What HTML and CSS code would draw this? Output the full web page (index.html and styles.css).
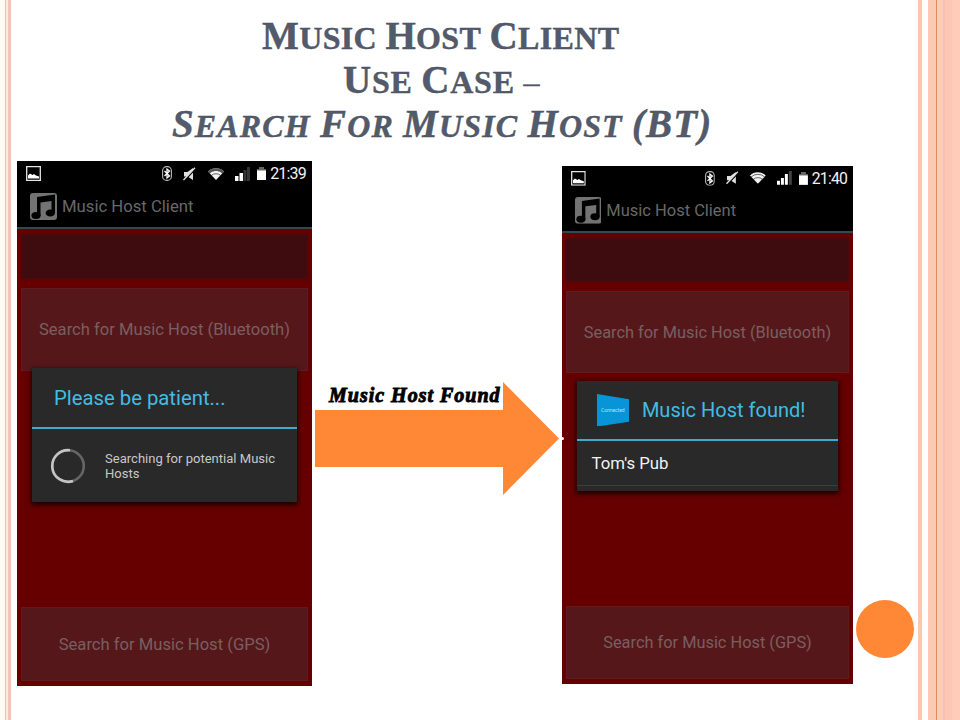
FILE: index.html
```
<!DOCTYPE html>
<html lang="en">
<head>
<meta charset="utf-8">
<title>Music Host Client</title>
<link rel="stylesheet" href="styles.css">
</head>
<body>
<svg class="defs" width="0" height="0">
  <symbol id="picture" viewBox="0 0 15 15"><path d="M.7.7h13.6v13.6H.7z" fill="none" stroke="#e4e4e4" stroke-width="1.3"/><path d="M2 12.500V9.500l2-2 2.500 1.500L8 8l2 1.500 3 1v2z" fill="#fff"/></symbol>
  <symbol id="bluetooth" viewBox="0 0 10 15"><rect x=".6" y=".6" width="8.800" height="13.800" rx="4" fill="none" stroke="#bbb" stroke-width="1.100"/><path d="M2.500 5l5 5L5 12V3l2.500 2-5 5" fill="none" stroke="#fff" stroke-width="1.300"/></symbol>
  <symbol id="muted" viewBox="0 0 13 14"><path d="M1 5h3.500L10 1v12l-5.500-3.500H1z" fill="#e0e0e0"/><path d="M1 14L13 1.500" stroke="#000" stroke-width="1.300"/><path d="M.5 13L12 .8" stroke="#e0e0e0" stroke-width="1.300"/></symbol>
  <symbol id="wifi" viewBox="0 0 16 12"><path d="M0 3.500a11.500 11.500 0 0 1 16 0L8 12z" fill="#f4f4f4"/><path d="M1 5.200a10 10 0 0 1 14 0M3.200 7.600a7 7 0 0 1 9.600 0" fill="none" stroke="#222" stroke-width=".7"/></symbol>
  <symbol id="music" viewBox="0 0 27 27"><rect width="27" height="27" rx="3" fill="#737373"/><path d="M7 4L25 1.500V20h-3.500V8L10.500 9.500V23H7z" fill="#000"/><ellipse cx="6" cy="22.500" rx="4.600" ry="3.500" fill="#000"/><ellipse cx="20.300" cy="20" rx="4.700" ry="3.500" fill="#000"/></symbol>
</svg>
<main class="slide">
  <h1 class="title">
    <span class="line one"><span class="w">Music</span> <span class="w">Host</span> <span class="w">Client</span></span>
    <span class="line two"><span class="w">Use</span> <span class="w">Case</span> <span class="dash">–</span></span>
    <span class="line three"><span class="w">Search</span> <span class="w">For</span> <span class="w">Music</span> <span class="w">Host</span> <span class="big">(BT)</span></span>
  </h1>
  <div class="flow">
    <section class="phone">
      <div class="status">
        <svg class="pic"><use href="#picture"/></svg>
        <svg class="bt"><use href="#bluetooth"/></svg>
        <svg class="mute"><use href="#muted"/></svg>
        <svg class="wifi" viewBox="0 0 16 12"><use href="#wifi" width="16" height="12"/><path d="M0 3.500a11.500 11.500 0 0 1 16 0L14.500 5.200a9.500 9.500 0 0 0-13 0z" fill="#555"/></svg>
        <svg class="bars" viewBox="0 0 15 14"><path d="M0 9h3.500v5H0zM4.500 6H8v8H4.500z" fill="#fff"/><path d="M8.500 3h3v11h-3zM12 0h3v14h-3z" fill="#333"/></svg>
        <svg class="battery" viewBox="0 0 9 13"><path d="M0 2h2V0h5v2h2v11H0z" fill="#666"/><path d="M0 3.500h9V13H0z" fill="#fff"/></svg>
        <span class="clock">21:39</span>
      </div>
      <header class="appbar"><svg class="logo"><use href="#music"/></svg><span>Music Host Client</span></header>
      <div class="field"></div>
      <div class="button search">Search for Music Host (Bluetooth)</div>
      <div class="button gps">Search for Music Host (GPS)</div>
      <div class="dialog waiting">
        <h2>Please be patient...</h2>
        <div class="progress">
          <svg class="spinner" viewBox="0 0 36 36" fill="none" stroke-width="2.600"><circle cx="18" cy="18" r="15.800" stroke="#666"/><path d="M23 33A15.800 15.800 0 1 1 20 2.300" stroke="#c4c4c4"/></svg>
          <p>Searching for potential Music Hosts</p>
        </div>
      </div>
    </section>
    <div class="step">
      <p class="caption">Music Host Found</p>
      <svg class="arrow" viewBox="0 0 248 113"><path d="M0 28h188V0l56 56.500L188 113V85H0z" fill="#ff8837"/></svg>
    </div>
    <section class="phone second">
      <div class="status">
        <svg class="pic"><use href="#picture"/></svg>
        <svg class="bt"><use href="#bluetooth"/></svg>
        <svg class="mute"><use href="#muted"/></svg>
        <svg class="wifi" viewBox="0 0 16 12"><use href="#wifi" width="16" height="12"/></svg>
        <svg class="bars" viewBox="0 0 15 14"><path d="M0 10h3v4H0zM4 7h3v7H4zM8 3h3v11H8z" fill="#fff"/><path d="M12 0h3v14h-3z" fill="#444"/></svg>
        <svg class="battery" viewBox="0 0 9 13"><path d="M0 2h2V0h5v2h2v11H0z" fill="#666"/><path d="M0 3.500h9V13H0z" fill="#fff"/></svg>
        <span class="clock">21:40</span>
      </div>
      <header class="appbar"><svg class="logo"><use href="#music"/></svg><span>Music Host Client</span></header>
      <div class="field"></div>
      <div class="button search">Search for Music Host (Bluetooth)</div>
      <div class="button gps">Search for Music Host (GPS)</div>
      <div class="dialog found">
        <h2><svg class="badge" viewBox="0 0 33 33"><path d="M0 0l33 5.500v22.500L0 33z" fill="#0795d8"/><text x="4" y="18">Connected</text></svg><span>Music Host found!</span></h2>
        <p class="item">Tom's Pub</p>
      </div>
      <i class="dot"></i>
    </section>
    <div class="disc"></div>
  </div>
</main>
</body>
</html>
```
FILE: styles.css
```
* { box-sizing: border-box; }
body { margin: 0; background: #fff; }
.defs { position: absolute; }
.slide {
  width: 960px;
  height: 720px;
  overflow: hidden;
  background: linear-gradient(90deg,
    #fffaf5 0 5px, #dcc8b5 5px 6px, #ffe9dd 6px 8px, #f5c2b8 8px 11px,
    #fff 11px 918px, #ffc6ae 918px 922px, #fff 922px 928px, #fcc9b5 928px 936px,
    #de8d59 936px 937px, #ffccb8 937px 943px, #f9c0ab 943px 945px, #fbc8b5 945px 952px, #ffccba 952px);
}
.title {
  margin: 0;
  padding: 16px 0 0 17px;
  width: 866px;
  height: 161px;
  color: #535b6b;
  font: bold 32px/44px "Liberation Serif", serif;
  text-transform: uppercase;
}
.line { display: block; width: max-content; white-space: nowrap; -webkit-text-stroke: .4px #434b5a; }
.w { display: inline-block; }
.w::first-letter, .big { font-size: 39px; line-height: 40px; }
.dash { font-weight: normal; }
.one { margin-left: 245px; letter-spacing: .35px; }
.two { margin-left: 326px; letter-spacing: .75px; }
.three { margin-left: 155px; font-style: italic; letter-spacing: 1.15px; }
.flow { display: flex; align-items: flex-start; padding-left: 17px; }
.phone {
  position: relative;
  flex: none;
  display: flex;
  flex-direction: column;
  width: 295px;
  height: 525px;
  background: #660000;
  font-family: Roboto, sans-serif;
}
.second { zoom: .9865; margin-top: 5px; }
.status {
  display: flex;
  align-items: center;
  height: 25px;
  padding: 0 6px 0 9px;
  background: #000;
  color: #f2f2f2;
  font-size: 16px;
}
.status svg { flex: none; }
.pic { width: 15px; height: 15px; }
.bt { width: 10px; height: 15px; margin-left: 121px; }
.mute { width: 13px; height: 14px; margin-left: 11px; }
.wifi { width: 16px; height: 12px; margin-left: 12px; }
.bars { width: 15px; height: 14px; margin-left: 11px; }
.battery { width: 9px; height: 13px; margin-left: 7px; }
.clock { margin-left: auto; letter-spacing: -.8px; }
.appbar {
  display: flex;
  align-items: center;
  gap: 5px;
  height: 43px;
  padding: 0 0 0 13px;
  background: #000;
  border-bottom: 2px solid #354650;
  color: #686868;
  font-size: 16.700px;
}
.second .appbar { border-bottom-width: 3px; }
.logo { width: 27px; height: 27px; }
.field { height: 45px; margin: 5px 4px 0; background: #3e0b0f; border: 1px solid #480a0d; }
.button {
  display: flex;
  align-items: center;
  justify-content: center;
  margin: 0 4px;
  background: #56171b;
  border: 1px solid #5c1c20;
  color: #795f60;
  font-size: 16.600px;
  white-space: nowrap;
}
.search { height: 83px; margin-top: 9px; }
.gps { height: 74px; margin-top: 236px; }
.dialog {
  position: absolute;
  left: 15px;
  width: 265px;
  background: #292929;
  box-shadow: 0 2px 5px 1px rgba(0, 0, 0, .75);
  border-radius: 1px;
}
.dialog h2 {
  display: flex;
  align-items: center;
  height: 61px;
  margin: 0;
  border-bottom: 2px solid #42a9cc;
  color: #42bce5;
  font-size: 20.300px;
  font-weight: normal;
  white-space: nowrap;
}
.waiting { top: 207px; height: 134px; }
.waiting h2 { padding-left: 22px; }
.progress { display: flex; align-items: center; gap: 19px; height: 73px; padding: 0 18px; }
.spinner { width: 36px; height: 36px; flex: none; }
.progress p { margin: 0; width: 180px; color: #c8c8c8; font-size: 13.050px; line-height: 15px; }
.found { top: 218px; height: 112px; }
.found h2 { gap: 13px; padding-left: 20px; border-bottom-width: 3px; }
.badge { width: 33px; height: 33px; }
.badge text { fill: #b9e2f5; font: 5px Roboto, sans-serif; }
.item {
  display: flex;
  align-items: center;
  height: 45px;
  margin: 0;
  padding-left: 15px;
  border-bottom: 1px solid #3c3f42;
  color: #f2f2f2;
  font-size: 17px;
}
.dot { position: absolute; left: 0; top: 275px; width: 2px; height: 3px; border-radius: 0 2px 2px 0; background: #fff; }
.step { width: 250px; margin-top: 221px; padding-left: 3px; }
.caption {
  margin: 0 0 -24px 14px;
  height: 24px;
  color: #000;
  font: italic bold 20px/26px "Liberation Serif", serif;
  letter-spacing: 1px;
  white-space: nowrap;
  -webkit-text-stroke: .9px #000;
}
.arrow { display: block; width: 248px; height: 113px; }
.disc { width: 58px; height: 58px; margin: 439px 0 0 3px; border-radius: 50%; background: #ff8837; }
```
